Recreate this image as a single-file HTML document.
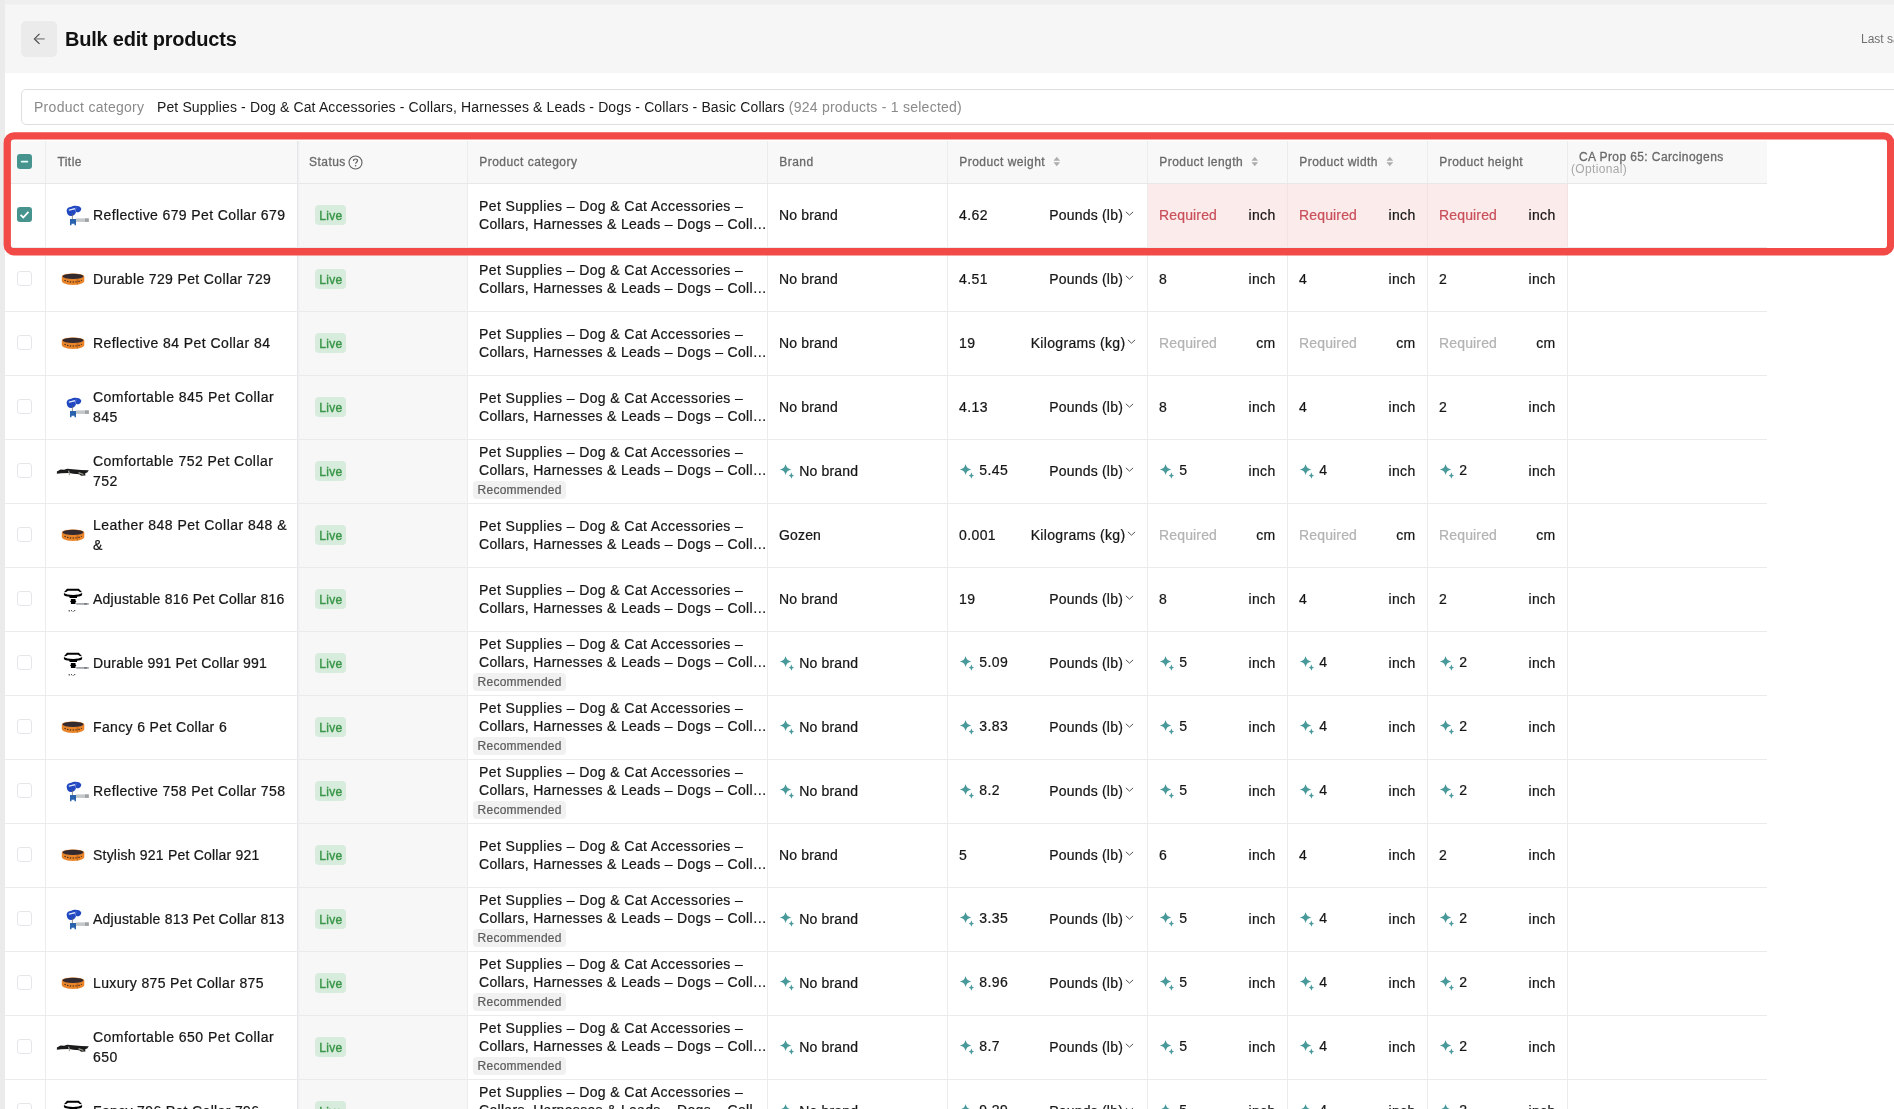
<!DOCTYPE html><html lang="en"><head><meta charset="utf-8"><title>Bulk edit products</title><style>
*{box-sizing:border-box;margin:0;padding:0}
html,body{width:1894px;height:1109px;overflow:hidden;background:#fff}
body{font-family:"Liberation Sans",sans-serif;font-size:14px;color:#161616;position:relative}
.lstrip{position:absolute;left:0;top:0;width:5px;height:1109px;background:#ebebeb}
.tstrip{position:absolute;left:0;top:0;width:1894px;height:5px;background:linear-gradient(#efefef 0,#efefef 4px,#f3f3f3 4px)}
.hdr{position:absolute;left:5px;top:5px;width:1889px;height:68px;background:#f6f6f6}
.back{position:absolute;left:21px;top:21px;width:36px;height:36px;border-radius:5px;background:#ebebeb}
.back svg{position:absolute;left:12px;top:12.200px}
h1{position:absolute;left:65px;top:26px;font-size:20px;line-height:26px;font-weight:700;color:#111;letter-spacing:-.22px;white-space:nowrap}
.last{position:absolute;left:1861px;top:31px;font-size:12px;line-height:16px;color:#6f6f6f;white-space:nowrap}
.cat{position:absolute;left:21px;top:89px;width:1900px;height:36px;border:1px solid #dedede;border-radius:5px;background:#fff;white-space:nowrap;line-height:34px;font-size:14px}
.cat .l{position:absolute;left:12px;color:#8a8a8a;letter-spacing:.28px}
.cat .v{position:absolute;left:135px;color:#1a1a1a;letter-spacing:.125px}
.cat .v i{font-style:normal;color:#8a8a8a;letter-spacing:.25px}
.tbl{position:absolute;left:5px;top:141px;width:1762px}
.tbl,.cat,h1,.last{will-change:transform}
.r{display:flex;height:64px;border-bottom:1px solid #ebebeb;background:#fff;-webkit-text-stroke:.22px}
.r.h{height:43px;background:#f8f8f8;border-bottom:1px solid #e8e8e8}
.c{position:relative;flex:none;border-right:1px solid #ebecee;height:100%;display:flex;align-items:center;white-space:nowrap;padding-bottom:2px}
.h .c{padding-bottom:0}
.c0{width:41px}.c1{width:252px}.c2{width:170px;background:linear-gradient(90deg,#f0f0f2 0,#f0f0f2 1px,#f5f5f6 1px,#f5f5f6 2px,#f7f7f7 2px)}.c3{width:300px}.c4{width:180px}.c5{width:200px}.c6,.c7,.c8{width:140px}.c9{width:199px;border-right:none}
.h .c{font-size:12px;color:#6a6a6a;padding-left:11.300px;-webkit-text-stroke:.3px #6a6a6a;letter-spacing:.46px}
.h .c2{background:linear-gradient(90deg,#f0f0f2 0,#f0f0f2 1px,#f5f5f6 1px,#f5f5f6 2px,#f8f8f8 2px)}
.c1{border-right-color:#e5e6e9}
.h .c9{border-top-right-radius:5px;display:block;padding:0;line-height:12px}
.h .c9 b{display:block;font-weight:400;position:absolute;left:11px;top:10px;letter-spacing:.4px}
.h .c9 i{display:block;font-style:normal;position:absolute;left:3px;top:22px;color:#a8a8a8;-webkit-text-stroke:0;letter-spacing:.35px}
.so{margin-left:8px;fill:#adadad;margin-top:-1px;width:7.500px}
.hp{margin-left:2px}
.cb{position:absolute;left:12px;top:23px;width:15px;height:15px}
.cb svg{display:block;width:15px;height:15px}
.cb.e{border:1px solid #e5e6ea;border-radius:3px;background:#fff}
.h .cb{top:12.500px}
.c1{padding-left:47px;white-space:normal;line-height:20px;letter-spacing:.38px;padding-right:4px}
.th{position:absolute;left:10px;top:17px;overflow:visible}
.c2{padding-left:17px}
.live{display:inline-block;height:20px;line-height:22px;padding:0 3.400px 0 4.200px;border-radius:4px;background:#d8ecdd;color:#3a9648;font-size:12px;-webkit-text-stroke:.4px #3a9648;letter-spacing:.3px}
.c3{display:block;padding-left:11px;line-height:18px;letter-spacing:.4px;padding-top:13px}
.c3.rc{padding-top:3px}
.c3 .l2{letter-spacing:.31px}
.rec{position:absolute;left:5px;top:40.500px;height:18.500px;line-height:18.500px;padding:0 4.600px;border-radius:4px;background:#f1f1f1;color:#5c5c5c;font-size:12px;letter-spacing:.25px}
.c4,.c5,.c6,.c7,.c8{padding-left:11px}
.sp{fill:#4a9a9c;margin-right:4.300px;margin-top:0px;flex:none}
.u{position:absolute;right:12px;top:0;height:calc(100% - 2px);display:flex;align-items:center;letter-spacing:.3px}
.cv{margin-left:2px;margin-top:-1px}
.c5 .sp+span,.c6 .sp+span,.c7 .sp+span,.c8 .sp+span{position:relative;top:-1px}
.c6 .u,.c7 .u,.c8 .u{right:11.500px}
.c5 .u{right:13px;letter-spacing:.2px}
.c5 .u.kg{right:10.600px;letter-spacing:.32px}
.c4 span{letter-spacing:.16px}
.c5>span:not(.u),.c6>span:not(.u):not(.ph),.c7>span:not(.u):not(.ph),.c8>span:not(.u):not(.ph){letter-spacing:.4px}
.ph{color:#b3b3b3;letter-spacing:.15px}
.err{background:#fbebeb;border-right-color:#f3e3e3}
.err .ph{color:#c9505a}
.red{position:absolute;left:0;top:120px;width:1900px;height:150px;z-index:5;overflow:visible}
.shadow{display:none}
</style></head><body>
<div class="tstrip"></div><div class="lstrip"></div>
<div class="hdr"></div><div class="back"><svg width="13" height="12" viewBox="0 0 13 12"><path d="M6.500 .9L1.400 5.900 6.500 10.900" fill="none" stroke="#444" stroke-width="1.150"/><path d="M1.700 5.900H11.700" fill="none" stroke="#777" stroke-width="1.150"/></svg></div><h1>Bulk edit products</h1><div class="last">Last saved</div>
<div class="cat"><span class="l">Product category</span><span class="v">Pet Supplies - Dog &amp; Cat Accessories - Collars, Harnesses &amp; Leads - Dogs - Collars - Basic Collars <i>(924 products - 1 selected)</i></span></div>
<div class="tbl">
<div class="r h"><div class="c c0"><span class="cb"><svg width="16" height="16" viewBox="0 0 16 16"><rect width="16" height="16" rx="3.200" fill="#47948f"/><rect x="4" y="7.100" width="8" height="1.900" rx=".9" fill="#e6ffff"/></svg></span></div><div class="c c1h c1" style="padding-left:11.400px">Title</div><div class="c c2" style="padding-left:11px">Status<svg class="hp" width="15" height="15" viewBox="0 0 15 15"><circle cx="7.500" cy="7.500" r="6.500" fill="none" stroke="#5f5f5f" stroke-width="1.100"/><path d="M5.500 6c0-1.200 .9-2 2-2s2 .8 2 1.800c0 1.500-1.900 1.500-1.900 3" fill="none" stroke="#5f5f5f" stroke-width="1.200"/><circle cx="7.600" cy="10.700" r=".8" fill="#5f5f5f"/></svg></div><div class="c c3" style="display:flex;padding-top:0">Product category</div><div class="c c4">Brand</div><div class="c c5">Product weight<svg class="so" width="8" height="11" viewBox="0 0 8 11"><path d="M4 .4L7.500 4.600H.5z"/><path d="M4 10.600L7.500 6.400H.5z"/></svg></div><div class="c c6">Product length<svg class="so" width="8" height="11" viewBox="0 0 8 11"><path d="M4 .4L7.500 4.600H.5z"/><path d="M4 10.600L7.500 6.400H.5z"/></svg></div><div class="c c7">Product width<svg class="so" width="8" height="11" viewBox="0 0 8 11"><path d="M4 .4L7.500 4.600H.5z"/><path d="M4 10.600L7.500 6.400H.5z"/></svg></div><div class="c c8">Product height</div><div class="c c9"><b>CA Prop 65: Carcinogens</b><i>(Optional)</i></div></div>
<div class="r"><div class="c c0"><span class="cb"><svg width="16" height="16" viewBox="0 0 16 16"><rect width="16" height="16" rx="3.200" fill="#47948f"/><path d="M3.800 8.300l2.900 2.900 5.500-6" fill="none" stroke="#fff" stroke-width="1.900"/></svg></span></div><div class="c c1"><svg class="th" width="34" height="28" viewBox="0 0 34 28"><path d="M10.700 10.200c-.3-2.600 1.800-4.300 4.600-4.500 1.400-1.100 4-1.300 5.600-.6 1.600-.3 3.200 .5 3.500 1.700l.7-.4c.5 1.800-.3 3.700-2 4.500-1 .5-2.200 .4-3-.2-.6 2.400-2.400 4.100-4.800 4.300-2.600 .2-4.400-1.900-4.600-4.800z" fill="#2148c0"/><path d="M12.800 9.300c1.800-1 4.300-.9 6.200-1.700" stroke="#dfe7ff" stroke-width="1.200" fill="none"/><path d="M20.300 6.400c-.5 1.400-.9 2.800-.9 4.400" stroke="#7f97e6" stroke-width=".7" fill="none"/><path d="M16.400 12.500v6" stroke="#666" stroke-width=".7"/><path d="M14 18h6v6.200h-1.500v-1.400h-3v1.400H14z" fill="#2a62ad"/><rect x="20" y="17.400" width="12.800" height="3.500" fill="#c4c7ca"/><rect x="29" y="17.400" width="3.800" height="3.500" fill="#9fa3a7"/></svg><span style="letter-spacing:0.38px">Reflective 679 Pet Collar 679</span></div><div class="c c2"><span class="live">Live</span></div><div class="c c3">Pet Supplies – Dog &amp; Cat Accessories –<br><span class="l2">Collars, Harnesses &amp; Leads – Dogs – Coll…</span></div><div class="c c4"><span>No brand</span></div><div class="c c5"><span>4.62</span><span class="u">Pounds (lb)<svg class="cv" width="9" height="6" viewBox="0 0 9 6"><path d="M.9 .9l3.600 3.300L8.100 .9" fill="none" stroke="#555" stroke-width="1"/></svg></span></div><div class="c c6 err"><span class="ph">Required</span><span class="u">inch</span></div><div class="c c7 err"><span class="ph">Required</span><span class="u">inch</span></div><div class="c c8 err"><span class="ph">Required</span><span class="u">inch</span></div><div class="c c9"></div></div>
<div class="r"><div class="c c0"><span class="cb e"></span></div><div class="c c1"><svg class="th" width="34" height="28" viewBox="0 0 34 28"><path d="M5.800 11.800C5.800 9.600 11 8.500 17 8.500s11.300 1.100 11.300 3.300v4.300c0 2.400-5.300 3.900-11.300 3.900S5.800 18.500 5.800 16.100z" fill="#e8842a"/><ellipse cx="17" cy="11.300" rx="10.500" ry="2.600" fill="#332a30"/><path d="M8.500 15.300c2.400 1.300 5.300 1.700 8.500 1.700s6.300-.5 8.600-1.700" stroke="#3a2414" stroke-width="1.100" fill="none" stroke-dasharray="1.300 1.500"/><path d="M21.500 14.200v5" stroke="#c96a17" stroke-width="1.200"/></svg><span style="letter-spacing:0.36px">Durable 729 Pet Collar 729</span></div><div class="c c2"><span class="live">Live</span></div><div class="c c3">Pet Supplies – Dog &amp; Cat Accessories –<br><span class="l2">Collars, Harnesses &amp; Leads – Dogs – Coll…</span></div><div class="c c4"><span>No brand</span></div><div class="c c5"><span>4.51</span><span class="u">Pounds (lb)<svg class="cv" width="9" height="6" viewBox="0 0 9 6"><path d="M.9 .9l3.600 3.300L8.100 .9" fill="none" stroke="#555" stroke-width="1"/></svg></span></div><div class="c c6"><span>8</span><span class="u">inch</span></div><div class="c c7"><span>4</span><span class="u">inch</span></div><div class="c c8"><span>2</span><span class="u">inch</span></div><div class="c c9"></div></div>
<div class="r"><div class="c c0"><span class="cb e"></span></div><div class="c c1"><svg class="th" width="34" height="28" viewBox="0 0 34 28"><path d="M5.800 11.800C5.800 9.600 11 8.500 17 8.500s11.300 1.100 11.300 3.300v4.300c0 2.400-5.300 3.900-11.300 3.900S5.800 18.500 5.800 16.100z" fill="#e8842a"/><ellipse cx="17" cy="11.300" rx="10.500" ry="2.600" fill="#332a30"/><path d="M8.500 15.300c2.400 1.300 5.300 1.700 8.500 1.700s6.300-.5 8.600-1.700" stroke="#3a2414" stroke-width="1.100" fill="none" stroke-dasharray="1.300 1.500"/><path d="M21.500 14.200v5" stroke="#c96a17" stroke-width="1.200"/></svg><span style="letter-spacing:0.43px">Reflective 84 Pet Collar 84</span></div><div class="c c2"><span class="live">Live</span></div><div class="c c3">Pet Supplies – Dog &amp; Cat Accessories –<br><span class="l2">Collars, Harnesses &amp; Leads – Dogs – Coll…</span></div><div class="c c4"><span>No brand</span></div><div class="c c5"><span>19</span><span class="u kg">Kilograms (kg)<svg class="cv" width="9" height="6" viewBox="0 0 9 6"><path d="M.9 .9l3.600 3.300L8.100 .9" fill="none" stroke="#555" stroke-width="1"/></svg></span></div><div class="c c6"><span class="ph">Required</span><span class="u">cm</span></div><div class="c c7"><span class="ph">Required</span><span class="u">cm</span></div><div class="c c8"><span class="ph">Required</span><span class="u">cm</span></div><div class="c c9"></div></div>
<div class="r"><div class="c c0"><span class="cb e"></span></div><div class="c c1"><svg class="th" width="34" height="28" viewBox="0 0 34 28"><path d="M10.700 10.200c-.3-2.600 1.800-4.300 4.600-4.500 1.400-1.100 4-1.300 5.600-.6 1.600-.3 3.200 .5 3.500 1.700l.7-.4c.5 1.800-.3 3.700-2 4.500-1 .5-2.200 .4-3-.2-.6 2.400-2.400 4.100-4.800 4.300-2.600 .2-4.400-1.900-4.600-4.800z" fill="#2148c0"/><path d="M12.800 9.300c1.800-1 4.300-.9 6.200-1.700" stroke="#dfe7ff" stroke-width="1.200" fill="none"/><path d="M20.300 6.400c-.5 1.400-.9 2.800-.9 4.400" stroke="#7f97e6" stroke-width=".7" fill="none"/><path d="M16.400 12.500v6" stroke="#666" stroke-width=".7"/><path d="M14 18h6v6.200h-1.500v-1.400h-3v1.400H14z" fill="#2a62ad"/><rect x="20" y="17.400" width="12.800" height="3.500" fill="#c4c7ca"/><rect x="29" y="17.400" width="3.800" height="3.500" fill="#9fa3a7"/></svg><span style="letter-spacing:0.47px">Comfortable 845 Pet Collar 845</span></div><div class="c c2"><span class="live">Live</span></div><div class="c c3">Pet Supplies – Dog &amp; Cat Accessories –<br><span class="l2">Collars, Harnesses &amp; Leads – Dogs – Coll…</span></div><div class="c c4"><span>No brand</span></div><div class="c c5"><span>4.13</span><span class="u">Pounds (lb)<svg class="cv" width="9" height="6" viewBox="0 0 9 6"><path d="M.9 .9l3.600 3.300L8.100 .9" fill="none" stroke="#555" stroke-width="1"/></svg></span></div><div class="c c6"><span>8</span><span class="u">inch</span></div><div class="c c7"><span>4</span><span class="u">inch</span></div><div class="c c8"><span>2</span><span class="u">inch</span></div><div class="c c9"></div></div>
<div class="r"><div class="c c0"><span class="cb e"></span></div><div class="c c1"><svg class="th" style="margin-top:1.300px" width="34" height="28" viewBox="0 0 34 28"><path d="M.9 13.600l3.600-2.200 3.600 .3 3.200-.9 8 .8 6 .5 7.500 .2-1.600 2.200-2 .7 .2 2.400-4.200 .2-2-1.500-6-.6-4-.7-7.800 .2-4.500 .6z" fill="#1b1b1b"/><path d="M12.600 12.700l1 4.400M22.500 14.600l5 1.900" stroke="#a39f94" stroke-width="1.200"/></svg><span style="letter-spacing:0.44px">Comfortable 752 Pet Collar 752</span></div><div class="c c2"><span class="live">Live</span></div><div class="c c3 rc">Pet Supplies – Dog &amp; Cat Accessories –<br><span class="l2">Collars, Harnesses &amp; Leads – Dogs – Coll…</span><span class="rec">Recommended</span></div><div class="c c4"><svg class="sp" width="16" height="16" viewBox="0 0 16 16"><path d="M6.57 0.97Q7.38 5.70 12.37 6.47Q7.38 7.24 6.57 11.97Q5.76 7.24 0.77 6.47Q5.76 5.70 6.57 0.97z"/><path d="M12.38 9.43Q12.77 12.10 15.18 12.53Q12.77 12.96 12.38 15.63Q11.99 12.96 9.58 12.53Q11.99 12.10 12.38 9.43z"/></svg><span>No brand</span></div><div class="c c5"><svg class="sp" width="16" height="16" viewBox="0 0 16 16"><path d="M6.57 0.97Q7.38 5.70 12.37 6.47Q7.38 7.24 6.57 11.97Q5.76 7.24 0.77 6.47Q5.76 5.70 6.57 0.97z"/><path d="M12.38 9.43Q12.77 12.10 15.18 12.53Q12.77 12.96 12.38 15.63Q11.99 12.96 9.58 12.53Q11.99 12.10 12.38 9.43z"/></svg><span>5.45</span><span class="u">Pounds (lb)<svg class="cv" width="9" height="6" viewBox="0 0 9 6"><path d="M.9 .9l3.600 3.300L8.100 .9" fill="none" stroke="#555" stroke-width="1"/></svg></span></div><div class="c c6"><svg class="sp" width="16" height="16" viewBox="0 0 16 16"><path d="M6.57 0.97Q7.38 5.70 12.37 6.47Q7.38 7.24 6.57 11.97Q5.76 7.24 0.77 6.47Q5.76 5.70 6.57 0.97z"/><path d="M12.38 9.43Q12.77 12.10 15.18 12.53Q12.77 12.96 12.38 15.63Q11.99 12.96 9.58 12.53Q11.99 12.10 12.38 9.43z"/></svg><span>5</span><span class="u">inch</span></div><div class="c c7"><svg class="sp" width="16" height="16" viewBox="0 0 16 16"><path d="M6.57 0.97Q7.38 5.70 12.37 6.47Q7.38 7.24 6.57 11.97Q5.76 7.24 0.77 6.47Q5.76 5.70 6.57 0.97z"/><path d="M12.38 9.43Q12.77 12.10 15.18 12.53Q12.77 12.96 12.38 15.63Q11.99 12.96 9.58 12.53Q11.99 12.10 12.38 9.43z"/></svg><span>4</span><span class="u">inch</span></div><div class="c c8"><svg class="sp" width="16" height="16" viewBox="0 0 16 16"><path d="M6.57 0.97Q7.38 5.70 12.37 6.47Q7.38 7.24 6.57 11.97Q5.76 7.24 0.77 6.47Q5.76 5.70 6.57 0.97z"/><path d="M12.38 9.43Q12.77 12.10 15.18 12.53Q12.77 12.96 12.38 15.63Q11.99 12.96 9.58 12.53Q11.99 12.10 12.38 9.43z"/></svg><span>2</span><span class="u">inch</span></div><div class="c c9"></div></div>
<div class="r"><div class="c c0"><span class="cb e"></span></div><div class="c c1"><svg class="th" width="34" height="28" viewBox="0 0 34 28"><path d="M5.800 11.800C5.800 9.600 11 8.500 17 8.500s11.300 1.100 11.300 3.300v4.300c0 2.400-5.300 3.900-11.300 3.900S5.800 18.500 5.800 16.100z" fill="#e8842a"/><ellipse cx="17" cy="11.300" rx="10.500" ry="2.600" fill="#332a30"/><path d="M8.500 15.300c2.400 1.300 5.300 1.700 8.500 1.700s6.300-.5 8.600-1.700" stroke="#3a2414" stroke-width="1.100" fill="none" stroke-dasharray="1.300 1.500"/><path d="M21.500 14.200v5" stroke="#c96a17" stroke-width="1.200"/></svg><span style="letter-spacing:0.48px">Leather 848 Pet Collar 848 &amp; &amp;</span></div><div class="c c2"><span class="live">Live</span></div><div class="c c3">Pet Supplies – Dog &amp; Cat Accessories –<br><span class="l2">Collars, Harnesses &amp; Leads – Dogs – Coll…</span></div><div class="c c4"><span>Gozen</span></div><div class="c c5"><span>0.001</span><span class="u kg">Kilograms (kg)<svg class="cv" width="9" height="6" viewBox="0 0 9 6"><path d="M.9 .9l3.600 3.300L8.100 .9" fill="none" stroke="#555" stroke-width="1"/></svg></span></div><div class="c c6"><span class="ph">Required</span><span class="u">cm</span></div><div class="c c7"><span class="ph">Required</span><span class="u">cm</span></div><div class="c c8"><span class="ph">Required</span><span class="u">cm</span></div><div class="c c9"></div></div>
<div class="r"><div class="c c0"><span class="cb e"></span></div><div class="c c1"><svg class="th" width="34" height="28" viewBox="0 0 34 28"><path d="M7.900 7.300L11 3.700h11.800l3.300 3.600-2.300-.3-1.800-1.200H12L10.200 7z" fill="#000"/><path d="M7.900 8.100V10c.6 1.200 3.200 1.600 5.600 1.700v1.200H21v-1.200c2.400-.1 4.500-.5 5.100-1.700V8.100c-1.600 1.300-5.100 1.800-9.100 1.800s-7.500-.5-9.100-1.800z" fill="#000"/><path d="M14.900 14h4.600v1.600l.9 .8-.9 .8v1.700h-4.600v-1.700l-.9-.8 .9-.8z" fill="#000"/><rect x="20.300" y="18" width="12.500" height="1.800" fill="#a2a7ab"/><rect x="28" y="18" width="3" height="1.800" fill="#7d8388"/><path d="M13.200 25v1.600M15.300 25.200l.8 1.200M17.600 26.600l1.600-1.600" stroke="#000" stroke-width=".8"/></svg><span style="letter-spacing:0.22px">Adjustable 816 Pet Collar 816</span></div><div class="c c2"><span class="live">Live</span></div><div class="c c3">Pet Supplies – Dog &amp; Cat Accessories –<br><span class="l2">Collars, Harnesses &amp; Leads – Dogs – Coll…</span></div><div class="c c4"><span>No brand</span></div><div class="c c5"><span>19</span><span class="u">Pounds (lb)<svg class="cv" width="9" height="6" viewBox="0 0 9 6"><path d="M.9 .9l3.600 3.300L8.100 .9" fill="none" stroke="#555" stroke-width="1"/></svg></span></div><div class="c c6"><span>8</span><span class="u">inch</span></div><div class="c c7"><span>4</span><span class="u">inch</span></div><div class="c c8"><span>2</span><span class="u">inch</span></div><div class="c c9"></div></div>
<div class="r"><div class="c c0"><span class="cb e"></span></div><div class="c c1"><svg class="th" width="34" height="28" viewBox="0 0 34 28"><path d="M7.900 7.300L11 3.700h11.800l3.300 3.600-2.300-.3-1.800-1.200H12L10.200 7z" fill="#000"/><path d="M7.900 8.100V10c.6 1.200 3.200 1.600 5.600 1.700v1.200H21v-1.200c2.400-.1 4.500-.5 5.100-1.700V8.100c-1.600 1.300-5.100 1.800-9.100 1.800s-7.500-.5-9.100-1.800z" fill="#000"/><path d="M14.900 14h4.600v1.600l.9 .8-.9 .8v1.700h-4.600v-1.700l-.9-.8 .9-.8z" fill="#000"/><rect x="20.300" y="18" width="12.500" height="1.800" fill="#a2a7ab"/><rect x="28" y="18" width="3" height="1.800" fill="#7d8388"/><path d="M13.200 25v1.600M15.300 25.200l.8 1.200M17.600 26.600l1.600-1.600" stroke="#000" stroke-width=".8"/></svg><span style="letter-spacing:0.20px">Durable 991 Pet Collar 991</span></div><div class="c c2"><span class="live">Live</span></div><div class="c c3 rc">Pet Supplies – Dog &amp; Cat Accessories –<br><span class="l2">Collars, Harnesses &amp; Leads – Dogs – Coll…</span><span class="rec">Recommended</span></div><div class="c c4"><svg class="sp" width="16" height="16" viewBox="0 0 16 16"><path d="M6.57 0.97Q7.38 5.70 12.37 6.47Q7.38 7.24 6.57 11.97Q5.76 7.24 0.77 6.47Q5.76 5.70 6.57 0.97z"/><path d="M12.38 9.43Q12.77 12.10 15.18 12.53Q12.77 12.96 12.38 15.63Q11.99 12.96 9.58 12.53Q11.99 12.10 12.38 9.43z"/></svg><span>No brand</span></div><div class="c c5"><svg class="sp" width="16" height="16" viewBox="0 0 16 16"><path d="M6.57 0.97Q7.38 5.70 12.37 6.47Q7.38 7.24 6.57 11.97Q5.76 7.24 0.77 6.47Q5.76 5.70 6.57 0.97z"/><path d="M12.38 9.43Q12.77 12.10 15.18 12.53Q12.77 12.96 12.38 15.63Q11.99 12.96 9.58 12.53Q11.99 12.10 12.38 9.43z"/></svg><span>5.09</span><span class="u">Pounds (lb)<svg class="cv" width="9" height="6" viewBox="0 0 9 6"><path d="M.9 .9l3.600 3.300L8.100 .9" fill="none" stroke="#555" stroke-width="1"/></svg></span></div><div class="c c6"><svg class="sp" width="16" height="16" viewBox="0 0 16 16"><path d="M6.57 0.97Q7.38 5.70 12.37 6.47Q7.38 7.24 6.57 11.97Q5.76 7.24 0.77 6.47Q5.76 5.70 6.57 0.97z"/><path d="M12.38 9.43Q12.77 12.10 15.18 12.53Q12.77 12.96 12.38 15.63Q11.99 12.96 9.58 12.53Q11.99 12.10 12.38 9.43z"/></svg><span>5</span><span class="u">inch</span></div><div class="c c7"><svg class="sp" width="16" height="16" viewBox="0 0 16 16"><path d="M6.57 0.97Q7.38 5.70 12.37 6.47Q7.38 7.24 6.57 11.97Q5.76 7.24 0.77 6.47Q5.76 5.70 6.57 0.97z"/><path d="M12.38 9.43Q12.77 12.10 15.18 12.53Q12.77 12.96 12.38 15.63Q11.99 12.96 9.58 12.53Q11.99 12.10 12.38 9.43z"/></svg><span>4</span><span class="u">inch</span></div><div class="c c8"><svg class="sp" width="16" height="16" viewBox="0 0 16 16"><path d="M6.57 0.97Q7.38 5.70 12.37 6.47Q7.38 7.24 6.57 11.97Q5.76 7.24 0.77 6.47Q5.76 5.70 6.57 0.97z"/><path d="M12.38 9.43Q12.77 12.10 15.18 12.53Q12.77 12.96 12.38 15.63Q11.99 12.96 9.58 12.53Q11.99 12.10 12.38 9.43z"/></svg><span>2</span><span class="u">inch</span></div><div class="c c9"></div></div>
<div class="r"><div class="c c0"><span class="cb e"></span></div><div class="c c1"><svg class="th" width="34" height="28" viewBox="0 0 34 28"><path d="M5.800 11.800C5.800 9.600 11 8.500 17 8.500s11.300 1.100 11.300 3.300v4.300c0 2.400-5.300 3.900-11.300 3.900S5.800 18.500 5.800 16.100z" fill="#e8842a"/><ellipse cx="17" cy="11.300" rx="10.500" ry="2.600" fill="#332a30"/><path d="M8.500 15.300c2.400 1.300 5.300 1.700 8.500 1.700s6.300-.5 8.600-1.700" stroke="#3a2414" stroke-width="1.100" fill="none" stroke-dasharray="1.300 1.500"/><path d="M21.500 14.200v5" stroke="#c96a17" stroke-width="1.200"/></svg><span style="letter-spacing:0.36px">Fancy 6 Pet Collar 6</span></div><div class="c c2"><span class="live">Live</span></div><div class="c c3 rc">Pet Supplies – Dog &amp; Cat Accessories –<br><span class="l2">Collars, Harnesses &amp; Leads – Dogs – Coll…</span><span class="rec">Recommended</span></div><div class="c c4"><svg class="sp" width="16" height="16" viewBox="0 0 16 16"><path d="M6.57 0.97Q7.38 5.70 12.37 6.47Q7.38 7.24 6.57 11.97Q5.76 7.24 0.77 6.47Q5.76 5.70 6.57 0.97z"/><path d="M12.38 9.43Q12.77 12.10 15.18 12.53Q12.77 12.96 12.38 15.63Q11.99 12.96 9.58 12.53Q11.99 12.10 12.38 9.43z"/></svg><span>No brand</span></div><div class="c c5"><svg class="sp" width="16" height="16" viewBox="0 0 16 16"><path d="M6.57 0.97Q7.38 5.70 12.37 6.47Q7.38 7.24 6.57 11.97Q5.76 7.24 0.77 6.47Q5.76 5.70 6.57 0.97z"/><path d="M12.38 9.43Q12.77 12.10 15.18 12.53Q12.77 12.96 12.38 15.63Q11.99 12.96 9.58 12.53Q11.99 12.10 12.38 9.43z"/></svg><span>3.83</span><span class="u">Pounds (lb)<svg class="cv" width="9" height="6" viewBox="0 0 9 6"><path d="M.9 .9l3.600 3.300L8.100 .9" fill="none" stroke="#555" stroke-width="1"/></svg></span></div><div class="c c6"><svg class="sp" width="16" height="16" viewBox="0 0 16 16"><path d="M6.57 0.97Q7.38 5.70 12.37 6.47Q7.38 7.24 6.57 11.97Q5.76 7.24 0.77 6.47Q5.76 5.70 6.57 0.97z"/><path d="M12.38 9.43Q12.77 12.10 15.18 12.53Q12.77 12.96 12.38 15.63Q11.99 12.96 9.58 12.53Q11.99 12.10 12.38 9.43z"/></svg><span>5</span><span class="u">inch</span></div><div class="c c7"><svg class="sp" width="16" height="16" viewBox="0 0 16 16"><path d="M6.57 0.97Q7.38 5.70 12.37 6.47Q7.38 7.24 6.57 11.97Q5.76 7.24 0.77 6.47Q5.76 5.70 6.57 0.97z"/><path d="M12.38 9.43Q12.77 12.10 15.18 12.53Q12.77 12.96 12.38 15.63Q11.99 12.96 9.58 12.53Q11.99 12.10 12.38 9.43z"/></svg><span>4</span><span class="u">inch</span></div><div class="c c8"><svg class="sp" width="16" height="16" viewBox="0 0 16 16"><path d="M6.57 0.97Q7.38 5.70 12.37 6.47Q7.38 7.24 6.57 11.97Q5.76 7.24 0.77 6.47Q5.76 5.70 6.57 0.97z"/><path d="M12.38 9.43Q12.77 12.10 15.18 12.53Q12.77 12.96 12.38 15.63Q11.99 12.96 9.58 12.53Q11.99 12.10 12.38 9.43z"/></svg><span>2</span><span class="u">inch</span></div><div class="c c9"></div></div>
<div class="r"><div class="c c0"><span class="cb e"></span></div><div class="c c1"><svg class="th" width="34" height="28" viewBox="0 0 34 28"><path d="M10.700 10.200c-.3-2.600 1.800-4.300 4.600-4.500 1.400-1.100 4-1.300 5.600-.6 1.600-.3 3.200 .5 3.500 1.700l.7-.4c.5 1.800-.3 3.700-2 4.500-1 .5-2.200 .4-3-.2-.6 2.400-2.400 4.100-4.800 4.300-2.600 .2-4.400-1.900-4.600-4.800z" fill="#2148c0"/><path d="M12.800 9.300c1.800-1 4.300-.9 6.200-1.700" stroke="#dfe7ff" stroke-width="1.200" fill="none"/><path d="M20.300 6.400c-.5 1.400-.9 2.800-.9 4.400" stroke="#7f97e6" stroke-width=".7" fill="none"/><path d="M16.400 12.500v6" stroke="#666" stroke-width=".7"/><path d="M14 18h6v6.200h-1.500v-1.400h-3v1.400H14z" fill="#2a62ad"/><rect x="20" y="17.400" width="12.800" height="3.500" fill="#c4c7ca"/><rect x="29" y="17.400" width="3.800" height="3.500" fill="#9fa3a7"/></svg><span style="letter-spacing:0.38px">Reflective 758 Pet Collar 758</span></div><div class="c c2"><span class="live">Live</span></div><div class="c c3 rc">Pet Supplies – Dog &amp; Cat Accessories –<br><span class="l2">Collars, Harnesses &amp; Leads – Dogs – Coll…</span><span class="rec">Recommended</span></div><div class="c c4"><svg class="sp" width="16" height="16" viewBox="0 0 16 16"><path d="M6.57 0.97Q7.38 5.70 12.37 6.47Q7.38 7.24 6.57 11.97Q5.76 7.24 0.77 6.47Q5.76 5.70 6.57 0.97z"/><path d="M12.38 9.43Q12.77 12.10 15.18 12.53Q12.77 12.96 12.38 15.63Q11.99 12.96 9.58 12.53Q11.99 12.10 12.38 9.43z"/></svg><span>No brand</span></div><div class="c c5"><svg class="sp" width="16" height="16" viewBox="0 0 16 16"><path d="M6.57 0.97Q7.38 5.70 12.37 6.47Q7.38 7.24 6.57 11.97Q5.76 7.24 0.77 6.47Q5.76 5.70 6.57 0.97z"/><path d="M12.38 9.43Q12.77 12.10 15.18 12.53Q12.77 12.96 12.38 15.63Q11.99 12.96 9.58 12.53Q11.99 12.10 12.38 9.43z"/></svg><span>8.2</span><span class="u">Pounds (lb)<svg class="cv" width="9" height="6" viewBox="0 0 9 6"><path d="M.9 .9l3.600 3.300L8.100 .9" fill="none" stroke="#555" stroke-width="1"/></svg></span></div><div class="c c6"><svg class="sp" width="16" height="16" viewBox="0 0 16 16"><path d="M6.57 0.97Q7.38 5.70 12.37 6.47Q7.38 7.24 6.57 11.97Q5.76 7.24 0.77 6.47Q5.76 5.70 6.57 0.97z"/><path d="M12.38 9.43Q12.77 12.10 15.18 12.53Q12.77 12.96 12.38 15.63Q11.99 12.96 9.58 12.53Q11.99 12.10 12.38 9.43z"/></svg><span>5</span><span class="u">inch</span></div><div class="c c7"><svg class="sp" width="16" height="16" viewBox="0 0 16 16"><path d="M6.57 0.97Q7.38 5.70 12.37 6.47Q7.38 7.24 6.57 11.97Q5.76 7.24 0.77 6.47Q5.76 5.70 6.57 0.97z"/><path d="M12.38 9.43Q12.77 12.10 15.18 12.53Q12.77 12.96 12.38 15.63Q11.99 12.96 9.58 12.53Q11.99 12.10 12.38 9.43z"/></svg><span>4</span><span class="u">inch</span></div><div class="c c8"><svg class="sp" width="16" height="16" viewBox="0 0 16 16"><path d="M6.57 0.97Q7.38 5.70 12.37 6.47Q7.38 7.24 6.57 11.97Q5.76 7.24 0.77 6.47Q5.76 5.70 6.57 0.97z"/><path d="M12.38 9.43Q12.77 12.10 15.18 12.53Q12.77 12.96 12.38 15.63Q11.99 12.96 9.58 12.53Q11.99 12.10 12.38 9.43z"/></svg><span>2</span><span class="u">inch</span></div><div class="c c9"></div></div>
<div class="r"><div class="c c0"><span class="cb e"></span></div><div class="c c1"><svg class="th" width="34" height="28" viewBox="0 0 34 28"><path d="M5.800 11.800C5.800 9.600 11 8.500 17 8.500s11.300 1.100 11.300 3.300v4.300c0 2.400-5.300 3.900-11.300 3.900S5.800 18.500 5.800 16.100z" fill="#e8842a"/><ellipse cx="17" cy="11.300" rx="10.500" ry="2.600" fill="#332a30"/><path d="M8.500 15.300c2.400 1.300 5.300 1.700 8.500 1.700s6.300-.5 8.600-1.700" stroke="#3a2414" stroke-width="1.100" fill="none" stroke-dasharray="1.300 1.500"/><path d="M21.500 14.200v5" stroke="#c96a17" stroke-width="1.200"/></svg><span style="letter-spacing:0.21px">Stylish 921 Pet Collar 921</span></div><div class="c c2"><span class="live">Live</span></div><div class="c c3">Pet Supplies – Dog &amp; Cat Accessories –<br><span class="l2">Collars, Harnesses &amp; Leads – Dogs – Coll…</span></div><div class="c c4"><span>No brand</span></div><div class="c c5"><span>5</span><span class="u">Pounds (lb)<svg class="cv" width="9" height="6" viewBox="0 0 9 6"><path d="M.9 .9l3.600 3.300L8.100 .9" fill="none" stroke="#555" stroke-width="1"/></svg></span></div><div class="c c6"><span>6</span><span class="u">inch</span></div><div class="c c7"><span>4</span><span class="u">inch</span></div><div class="c c8"><span>2</span><span class="u">inch</span></div><div class="c c9"></div></div>
<div class="r"><div class="c c0"><span class="cb e"></span></div><div class="c c1"><svg class="th" width="34" height="28" viewBox="0 0 34 28"><path d="M10.700 10.200c-.3-2.600 1.800-4.300 4.600-4.500 1.400-1.100 4-1.300 5.600-.6 1.600-.3 3.200 .5 3.500 1.700l.7-.4c.5 1.800-.3 3.700-2 4.500-1 .5-2.200 .4-3-.2-.6 2.400-2.400 4.100-4.800 4.300-2.600 .2-4.400-1.900-4.600-4.800z" fill="#2148c0"/><path d="M12.800 9.300c1.800-1 4.300-.9 6.200-1.700" stroke="#dfe7ff" stroke-width="1.200" fill="none"/><path d="M20.300 6.400c-.5 1.400-.9 2.800-.9 4.400" stroke="#7f97e6" stroke-width=".7" fill="none"/><path d="M16.400 12.500v6" stroke="#666" stroke-width=".7"/><path d="M14 18h6v6.200h-1.500v-1.400h-3v1.400H14z" fill="#2a62ad"/><rect x="20" y="17.400" width="12.800" height="3.500" fill="#c4c7ca"/><rect x="29" y="17.400" width="3.800" height="3.500" fill="#9fa3a7"/></svg><span style="letter-spacing:0.22px">Adjustable 813 Pet Collar 813</span></div><div class="c c2"><span class="live">Live</span></div><div class="c c3 rc">Pet Supplies – Dog &amp; Cat Accessories –<br><span class="l2">Collars, Harnesses &amp; Leads – Dogs – Coll…</span><span class="rec">Recommended</span></div><div class="c c4"><svg class="sp" width="16" height="16" viewBox="0 0 16 16"><path d="M6.57 0.97Q7.38 5.70 12.37 6.47Q7.38 7.24 6.57 11.97Q5.76 7.24 0.77 6.47Q5.76 5.70 6.57 0.97z"/><path d="M12.38 9.43Q12.77 12.10 15.18 12.53Q12.77 12.96 12.38 15.63Q11.99 12.96 9.58 12.53Q11.99 12.10 12.38 9.43z"/></svg><span>No brand</span></div><div class="c c5"><svg class="sp" width="16" height="16" viewBox="0 0 16 16"><path d="M6.57 0.97Q7.38 5.70 12.37 6.47Q7.38 7.24 6.57 11.97Q5.76 7.24 0.77 6.47Q5.76 5.70 6.57 0.97z"/><path d="M12.38 9.43Q12.77 12.10 15.18 12.53Q12.77 12.96 12.38 15.63Q11.99 12.96 9.58 12.53Q11.99 12.10 12.38 9.43z"/></svg><span>3.35</span><span class="u">Pounds (lb)<svg class="cv" width="9" height="6" viewBox="0 0 9 6"><path d="M.9 .9l3.600 3.300L8.100 .9" fill="none" stroke="#555" stroke-width="1"/></svg></span></div><div class="c c6"><svg class="sp" width="16" height="16" viewBox="0 0 16 16"><path d="M6.57 0.97Q7.38 5.70 12.37 6.47Q7.38 7.24 6.57 11.97Q5.76 7.24 0.77 6.47Q5.76 5.70 6.57 0.97z"/><path d="M12.38 9.43Q12.77 12.10 15.18 12.53Q12.77 12.96 12.38 15.63Q11.99 12.96 9.58 12.53Q11.99 12.10 12.38 9.43z"/></svg><span>5</span><span class="u">inch</span></div><div class="c c7"><svg class="sp" width="16" height="16" viewBox="0 0 16 16"><path d="M6.57 0.97Q7.38 5.70 12.37 6.47Q7.38 7.24 6.57 11.97Q5.76 7.24 0.77 6.47Q5.76 5.70 6.57 0.97z"/><path d="M12.38 9.43Q12.77 12.10 15.18 12.53Q12.77 12.96 12.38 15.63Q11.99 12.96 9.58 12.53Q11.99 12.10 12.38 9.43z"/></svg><span>4</span><span class="u">inch</span></div><div class="c c8"><svg class="sp" width="16" height="16" viewBox="0 0 16 16"><path d="M6.57 0.97Q7.38 5.70 12.37 6.47Q7.38 7.24 6.57 11.97Q5.76 7.24 0.77 6.47Q5.76 5.70 6.57 0.97z"/><path d="M12.38 9.43Q12.77 12.10 15.18 12.53Q12.77 12.96 12.38 15.63Q11.99 12.96 9.58 12.53Q11.99 12.10 12.38 9.43z"/></svg><span>2</span><span class="u">inch</span></div><div class="c c9"></div></div>
<div class="r"><div class="c c0"><span class="cb e"></span></div><div class="c c1"><svg class="th" width="34" height="28" viewBox="0 0 34 28"><path d="M5.800 11.800C5.800 9.600 11 8.500 17 8.500s11.300 1.100 11.300 3.300v4.300c0 2.400-5.300 3.900-11.300 3.900S5.800 18.500 5.800 16.100z" fill="#e8842a"/><ellipse cx="17" cy="11.300" rx="10.500" ry="2.600" fill="#332a30"/><path d="M8.500 15.300c2.400 1.300 5.300 1.700 8.500 1.700s6.300-.5 8.600-1.700" stroke="#3a2414" stroke-width="1.100" fill="none" stroke-dasharray="1.300 1.500"/><path d="M21.500 14.200v5" stroke="#c96a17" stroke-width="1.200"/></svg><span style="letter-spacing:0.36px">Luxury 875 Pet Collar 875</span></div><div class="c c2"><span class="live">Live</span></div><div class="c c3 rc">Pet Supplies – Dog &amp; Cat Accessories –<br><span class="l2">Collars, Harnesses &amp; Leads – Dogs – Coll…</span><span class="rec">Recommended</span></div><div class="c c4"><svg class="sp" width="16" height="16" viewBox="0 0 16 16"><path d="M6.57 0.97Q7.38 5.70 12.37 6.47Q7.38 7.24 6.57 11.97Q5.76 7.24 0.77 6.47Q5.76 5.70 6.57 0.97z"/><path d="M12.38 9.43Q12.77 12.10 15.18 12.53Q12.77 12.96 12.38 15.63Q11.99 12.96 9.58 12.53Q11.99 12.10 12.38 9.43z"/></svg><span>No brand</span></div><div class="c c5"><svg class="sp" width="16" height="16" viewBox="0 0 16 16"><path d="M6.57 0.97Q7.38 5.70 12.37 6.47Q7.38 7.24 6.57 11.97Q5.76 7.24 0.77 6.47Q5.76 5.70 6.57 0.97z"/><path d="M12.38 9.43Q12.77 12.10 15.18 12.53Q12.77 12.96 12.38 15.63Q11.99 12.96 9.58 12.53Q11.99 12.10 12.38 9.43z"/></svg><span>8.96</span><span class="u">Pounds (lb)<svg class="cv" width="9" height="6" viewBox="0 0 9 6"><path d="M.9 .9l3.600 3.300L8.100 .9" fill="none" stroke="#555" stroke-width="1"/></svg></span></div><div class="c c6"><svg class="sp" width="16" height="16" viewBox="0 0 16 16"><path d="M6.57 0.97Q7.38 5.70 12.37 6.47Q7.38 7.24 6.57 11.97Q5.76 7.24 0.77 6.47Q5.76 5.70 6.57 0.97z"/><path d="M12.38 9.43Q12.77 12.10 15.18 12.53Q12.77 12.96 12.38 15.63Q11.99 12.96 9.58 12.53Q11.99 12.10 12.38 9.43z"/></svg><span>5</span><span class="u">inch</span></div><div class="c c7"><svg class="sp" width="16" height="16" viewBox="0 0 16 16"><path d="M6.57 0.97Q7.38 5.70 12.37 6.47Q7.38 7.24 6.57 11.97Q5.76 7.24 0.77 6.47Q5.76 5.70 6.57 0.97z"/><path d="M12.38 9.43Q12.77 12.10 15.18 12.53Q12.77 12.96 12.38 15.63Q11.99 12.96 9.58 12.53Q11.99 12.10 12.38 9.43z"/></svg><span>4</span><span class="u">inch</span></div><div class="c c8"><svg class="sp" width="16" height="16" viewBox="0 0 16 16"><path d="M6.57 0.97Q7.38 5.70 12.37 6.47Q7.38 7.24 6.57 11.97Q5.76 7.24 0.77 6.47Q5.76 5.70 6.57 0.97z"/><path d="M12.38 9.43Q12.77 12.10 15.18 12.53Q12.77 12.96 12.38 15.63Q11.99 12.96 9.58 12.53Q11.99 12.10 12.38 9.43z"/></svg><span>2</span><span class="u">inch</span></div><div class="c c9"></div></div>
<div class="r"><div class="c c0"><span class="cb e"></span></div><div class="c c1"><svg class="th" style="margin-top:1.300px" width="34" height="28" viewBox="0 0 34 28"><path d="M.9 13.600l3.600-2.200 3.600 .3 3.200-.9 8 .8 6 .5 7.500 .2-1.600 2.200-2 .7 .2 2.400-4.200 .2-2-1.500-6-.6-4-.7-7.800 .2-4.500 .6z" fill="#1b1b1b"/><path d="M12.600 12.700l1 4.400M22.500 14.600l5 1.900" stroke="#a39f94" stroke-width="1.200"/></svg><span style="letter-spacing:0.47px">Comfortable 650 Pet Collar 650</span></div><div class="c c2"><span class="live">Live</span></div><div class="c c3 rc">Pet Supplies – Dog &amp; Cat Accessories –<br><span class="l2">Collars, Harnesses &amp; Leads – Dogs – Coll…</span><span class="rec">Recommended</span></div><div class="c c4"><svg class="sp" width="16" height="16" viewBox="0 0 16 16"><path d="M6.57 0.97Q7.38 5.70 12.37 6.47Q7.38 7.24 6.57 11.97Q5.76 7.24 0.77 6.47Q5.76 5.70 6.57 0.97z"/><path d="M12.38 9.43Q12.77 12.10 15.18 12.53Q12.77 12.96 12.38 15.63Q11.99 12.96 9.58 12.53Q11.99 12.10 12.38 9.43z"/></svg><span>No brand</span></div><div class="c c5"><svg class="sp" width="16" height="16" viewBox="0 0 16 16"><path d="M6.57 0.97Q7.38 5.70 12.37 6.47Q7.38 7.24 6.57 11.97Q5.76 7.24 0.77 6.47Q5.76 5.70 6.57 0.97z"/><path d="M12.38 9.43Q12.77 12.10 15.18 12.53Q12.77 12.96 12.38 15.63Q11.99 12.96 9.58 12.53Q11.99 12.10 12.38 9.43z"/></svg><span>8.7</span><span class="u">Pounds (lb)<svg class="cv" width="9" height="6" viewBox="0 0 9 6"><path d="M.9 .9l3.600 3.300L8.100 .9" fill="none" stroke="#555" stroke-width="1"/></svg></span></div><div class="c c6"><svg class="sp" width="16" height="16" viewBox="0 0 16 16"><path d="M6.57 0.97Q7.38 5.70 12.37 6.47Q7.38 7.24 6.57 11.97Q5.76 7.24 0.77 6.47Q5.76 5.70 6.57 0.97z"/><path d="M12.38 9.43Q12.77 12.10 15.18 12.53Q12.77 12.96 12.38 15.63Q11.99 12.96 9.58 12.53Q11.99 12.10 12.38 9.43z"/></svg><span>5</span><span class="u">inch</span></div><div class="c c7"><svg class="sp" width="16" height="16" viewBox="0 0 16 16"><path d="M6.57 0.97Q7.38 5.70 12.37 6.47Q7.38 7.24 6.57 11.97Q5.76 7.24 0.77 6.47Q5.76 5.70 6.57 0.97z"/><path d="M12.38 9.43Q12.77 12.10 15.18 12.53Q12.77 12.96 12.38 15.63Q11.99 12.96 9.58 12.53Q11.99 12.10 12.38 9.43z"/></svg><span>4</span><span class="u">inch</span></div><div class="c c8"><svg class="sp" width="16" height="16" viewBox="0 0 16 16"><path d="M6.57 0.97Q7.38 5.70 12.37 6.47Q7.38 7.24 6.57 11.97Q5.76 7.24 0.77 6.47Q5.76 5.70 6.57 0.97z"/><path d="M12.38 9.43Q12.77 12.10 15.18 12.53Q12.77 12.96 12.38 15.63Q11.99 12.96 9.58 12.53Q11.99 12.10 12.38 9.43z"/></svg><span>2</span><span class="u">inch</span></div><div class="c c9"></div></div>
<div class="r"><div class="c c0"><span class="cb e"></span></div><div class="c c1"><svg class="th" width="34" height="28" viewBox="0 0 34 28"><path d="M7.900 7.300L11 3.700h11.800l3.300 3.600-2.300-.3-1.800-1.200H12L10.200 7z" fill="#000"/><path d="M7.900 8.100V10c.6 1.200 3.200 1.600 5.600 1.700v1.200H21v-1.200c2.400-.1 4.500-.5 5.100-1.700V8.100c-1.600 1.300-5.100 1.800-9.100 1.800s-7.500-.5-9.100-1.800z" fill="#000"/><path d="M14.900 14h4.600v1.600l.9 .8-.9 .8v1.700h-4.600v-1.700l-.9-.8 .9-.8z" fill="#000"/><rect x="20.300" y="18" width="12.500" height="1.800" fill="#a2a7ab"/><rect x="28" y="18" width="3" height="1.800" fill="#7d8388"/><path d="M13.200 25v1.600M15.300 25.200l.8 1.200M17.600 26.600l1.600-1.600" stroke="#000" stroke-width=".8"/></svg><span style="letter-spacing:0.35px">Fancy 796 Pet Collar 796</span></div><div class="c c2"><span class="live">Live</span></div><div class="c c3 rc">Pet Supplies – Dog &amp; Cat Accessories –<br><span class="l2">Collars, Harnesses &amp; Leads – Dogs – Coll…</span><span class="rec">Recommended</span></div><div class="c c4"><svg class="sp" width="16" height="16" viewBox="0 0 16 16"><path d="M6.57 0.97Q7.38 5.70 12.37 6.47Q7.38 7.24 6.57 11.97Q5.76 7.24 0.77 6.47Q5.76 5.70 6.57 0.97z"/><path d="M12.38 9.43Q12.77 12.10 15.18 12.53Q12.77 12.96 12.38 15.63Q11.99 12.96 9.58 12.53Q11.99 12.10 12.38 9.43z"/></svg><span>No brand</span></div><div class="c c5"><svg class="sp" width="16" height="16" viewBox="0 0 16 16"><path d="M6.57 0.97Q7.38 5.70 12.37 6.47Q7.38 7.24 6.57 11.97Q5.76 7.24 0.77 6.47Q5.76 5.70 6.57 0.97z"/><path d="M12.38 9.43Q12.77 12.10 15.18 12.53Q12.77 12.96 12.38 15.63Q11.99 12.96 9.58 12.53Q11.99 12.10 12.38 9.43z"/></svg><span>9.29</span><span class="u">Pounds (lb)<svg class="cv" width="9" height="6" viewBox="0 0 9 6"><path d="M.9 .9l3.600 3.300L8.100 .9" fill="none" stroke="#555" stroke-width="1"/></svg></span></div><div class="c c6"><svg class="sp" width="16" height="16" viewBox="0 0 16 16"><path d="M6.57 0.97Q7.38 5.70 12.37 6.47Q7.38 7.24 6.57 11.97Q5.76 7.24 0.77 6.47Q5.76 5.70 6.57 0.97z"/><path d="M12.38 9.43Q12.77 12.10 15.18 12.53Q12.77 12.96 12.38 15.63Q11.99 12.96 9.58 12.53Q11.99 12.10 12.38 9.43z"/></svg><span>5</span><span class="u">inch</span></div><div class="c c7"><svg class="sp" width="16" height="16" viewBox="0 0 16 16"><path d="M6.57 0.97Q7.38 5.70 12.37 6.47Q7.38 7.24 6.57 11.97Q5.76 7.24 0.77 6.47Q5.76 5.70 6.57 0.97z"/><path d="M12.38 9.43Q12.77 12.10 15.18 12.53Q12.77 12.96 12.38 15.63Q11.99 12.96 9.58 12.53Q11.99 12.10 12.38 9.43z"/></svg><span>4</span><span class="u">inch</span></div><div class="c c8"><svg class="sp" width="16" height="16" viewBox="0 0 16 16"><path d="M6.57 0.97Q7.38 5.70 12.37 6.47Q7.38 7.24 6.57 11.97Q5.76 7.24 0.77 6.47Q5.76 5.70 6.57 0.97z"/><path d="M12.38 9.43Q12.77 12.10 15.18 12.53Q12.77 12.96 12.38 15.63Q11.99 12.96 9.58 12.53Q11.99 12.10 12.38 9.43z"/></svg><span>2</span><span class="u">inch</span></div><div class="c c9"></div></div>
</div>
<div class="shadow"></div><svg class="red" width="1900" height="150" viewBox="0 120 1900 150"><rect x="7.250" y="135.950" width="1883.400" height="115.800" rx="6.800" fill="none" stroke="#f24a46" stroke-width="7.300"/></svg>
</body></html>
